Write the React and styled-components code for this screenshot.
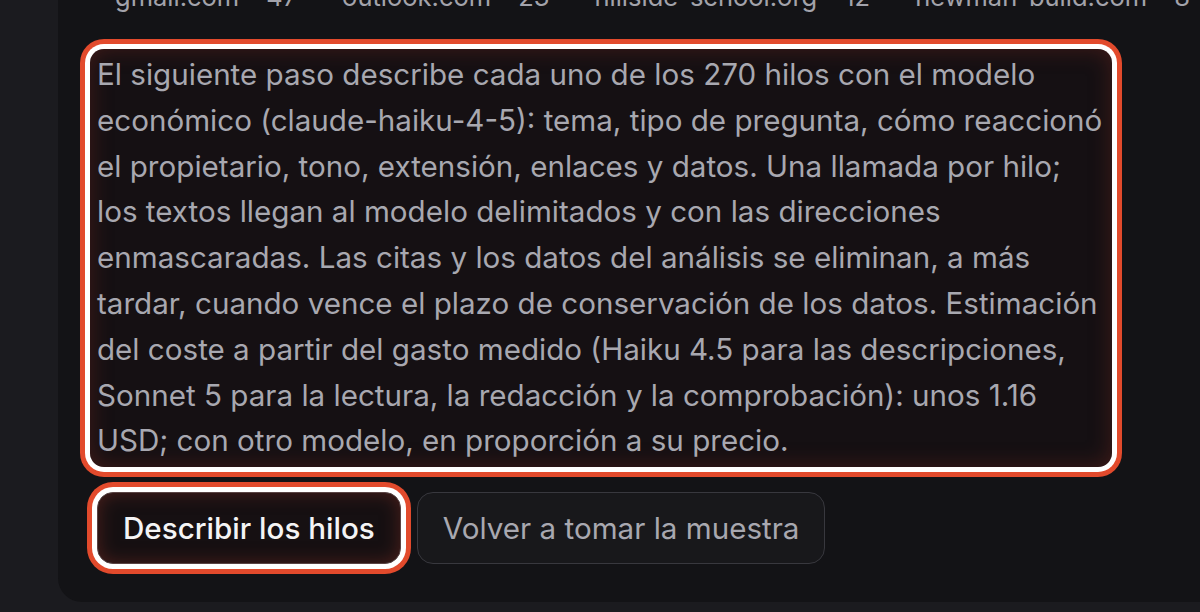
import React from "react";
import styled, { createGlobalStyle } from "styled-components";

const GlobalStyle = createGlobalStyle`
  html, body {
    margin: 0;
    padding: 0;
    background: #1b1b1f;
    overflow: hidden;
    height: 612px;
  }
  body {
    font-family: Inter, "Noto Sans", sans-serif;
  }
`;

const Page = styled.div`
  padding-left: 58px;
  overflow: hidden;
`;

const Card = styled.section`
  margin-top: -20px;
  width: 1300px;
  background: #131316;
  border-radius: 0 0 0 24px;
  padding: 0 0 38px 32px;
  box-sizing: border-box;
`;

const DomainRow = styled.div`
  display: flex;
  gap: 45px;
  padding-left: 25px;
  height: 33px;
  line-height: 33px;
  font-size: 25.5px;
  color: #a3a3ab;
  white-space: nowrap;
`;

const Domain = styled.span`
  display: flex;
  gap: 27px;
`;

const Note = styled.div`
  margin-top: 36px;
  width: 1022px;
  box-sizing: border-box;
  padding: 3px 7px;
  border-radius: 14px;
  background: #151013;
  box-shadow: inset 0 0 22px rgba(120, 40, 30, 0.45), 0 0 0 5px #ffffff,
    0 0 0 10px #e24a2c;
  color: #a8a8b0;
  font-size: 29.6px;
  line-height: 45.8px;
  white-space: nowrap;
`;

const Actions = styled.div`
  display: flex;
  gap: 16px;
  margin-top: 25px;
  padding-left: 7px;
`;

const Button = styled.button`
  font-family: Inter, "Noto Sans", sans-serif;
  font-size: 29.6px;
  height: 72px;
  padding: 0 25px;
  border-radius: 16px;
  cursor: pointer;
  border: 1px solid ${(p) => (p.$focused ? "#5a4444" : "#38383e")};
  background: ${(p) => (p.$focused ? "#161012" : "#18181b")};
  color: ${(p) => (p.$focused ? "#f4f4f5" : "#a8a8b0")};
  font-weight: ${(p) => (p.$focused ? 500 : 400)};
  box-shadow: ${(p) =>
    p.$focused
      ? "inset 0 0 18px rgba(130, 45, 35, 0.5), 0 0 0 5px #ffffff, 0 0 0 10px #e24a2c"
      : "none"};
`;

const domains = [
  ["gmail.com", 47],
  ["outlook.com", 23],
  ["hillside-school.org", 12],
  ["newman-build.com", 8],
];

const lines = [
  "El siguiente paso describe cada uno de los 270 hilos con el modelo",
  "económico (claude-haiku-4-5): tema, tipo de pregunta, cómo reaccionó",
  "el propietario, tono, extensión, enlaces y datos. Una llamada por hilo;",
  "los textos llegan al modelo delimitados y con las direcciones",
  "enmascaradas. Las citas y los datos del análisis se eliminan, a más",
  "tardar, cuando vence el plazo de conservación de los datos. Estimación",
  "del coste a partir del gasto medido (Haiku 4.5 para las descripciones,",
  "Sonnet 5 para la lectura, la redacción y la comprobación): unos 1.16",
  "USD; con otro modelo, en proporción a su precio.",
];

const App = () => {
  return (
    <Page>
      <GlobalStyle />
      <Card>
        <DomainRow>
          {domains.map(([name, count]) => (
            <Domain key={name}>
              <span>{name}</span>
              <span>{count}</span>
            </Domain>
          ))}
        </DomainRow>
        <Note tabIndex={0}>
          {lines.map((line, i) => (
            <div key={i}>{line}</div>
          ))}
        </Note>
        <Actions>
          <Button $focused>Describir los hilos</Button>
          <Button>Volver a tomar la muestra</Button>
        </Actions>
      </Card>
    </Page>
  );
};

export default App;
